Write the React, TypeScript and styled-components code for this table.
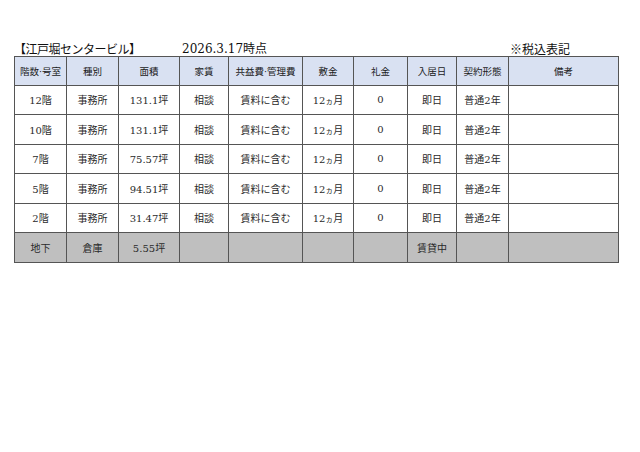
import React from "react";
import styled, { createGlobalStyle } from "styled-components";

const Global = createGlobalStyle`
  html, body { margin: 0; padding: 0; background: #ffffff; }
  body { font-family: "DejaVu Serif", "Noto Sans CJK JP", serif; color: #222; }
`;

const Page = styled.div`
  width: 640px;
  height: 452px;
  padding: 42px 0 0 14px;
  box-sizing: border-box;
`;

const TitleRow = styled.div`
  display: flex;
  align-items: flex-end;
  width: 604px;
  height: 14px;
  font-size: 12px;
  line-height: 14px;
  color: #111;
`;

const Title = styled.div`
  width: 168px;
  font-family: "Noto Sans CJK JP", sans-serif;
  letter-spacing: -0.5px;
`;

const DateText = styled.div`
  flex: 1;
  font-family: "DejaVu Serif", "Noto Sans CJK JP", serif;
  font-size: 12px;
  letter-spacing: 0px;
`;

const Note = styled.div`
  width: 108px;
  font-family: "Noto Sans CJK JP", sans-serif;
`;

const Table = styled.table`
  border-collapse: collapse;
  table-layout: fixed;
  width: 604px;
  border: 1px solid #444;
`;

const Th = styled.th`
  background: #d9e1f2;
  border: 1px solid #555;
  height: 27.5px;
  padding: 0;
  font-weight: normal;
  font-size: 9.5px;
  font-family: "DejaVu Sans", "Noto Sans CJK JP", sans-serif;
  color: #1a1a1a;
  text-align: center;
  vertical-align: middle;
`;

const Td = styled.td<{ $gray?: boolean }>`
  background: ${(p) => (p.$gray ? "#bfbfbf" : "#ffffff")};
  border: 1px solid #555;
  height: 28.5px;
  padding: 0;
  font-size: 10px;
  color: #2a2a2a;
  text-align: center;
  vertical-align: middle;
  white-space: nowrap;
`;

const widths = [52, 52, 61, 49, 74, 51, 54, 49, 52, 110];
const headers = ["階数·号室", "種別", "面積", "家賃", "共益費·管理費", "敷金", "礼金", "入居日", "契約形態", "備考"];

const rows: string[][] = [
  ["12階", "事務所", "131.1坪", "相談", "賃料に含む", "12ヵ月", "0", "即日", "普通2年", ""],
  ["10階", "事務所", "131.1坪", "相談", "賃料に含む", "12ヵ月", "0", "即日", "普通2年", ""],
  ["7階", "事務所", "75.57坪", "相談", "賃料に含む", "12ヵ月", "0", "即日", "普通2年", ""],
  ["5階", "事務所", "94.51坪", "相談", "賃料に含む", "12ヵ月", "0", "即日", "普通2年", ""],
  ["2階", "事務所", "31.47坪", "相談", "賃料に含む", "12ヵ月", "0", "即日", "普通2年", ""],
];
const lastRow = ["地下", "倉庫", "5.55坪", "", "", "", "", "賃貸中", "", ""];

const Small = styled.span`
  font-size: 8px;
`;

function renderCell(text: string) {
  if (text.includes("ヵ")) {
    const [a, b] = text.split("ヵ");
    return (
      <>
        {a}
        <Small>ヵ</Small>
        {b}
      </>
    );
  }
  return text;
}

export default function App() {
  return (
    <>
      <Global />
      <Page>
        <TitleRow>
          <Title>【江戸堀センタービル】</Title>
          <DateText>2026.3.17時点</DateText>
          <Note>※税込表記</Note>
        </TitleRow>
        <Table>
          <colgroup>
            {widths.map((w, i) => (
              <col key={i} style={{ width: w }} />
            ))}
          </colgroup>
          <thead>
            <tr>
              {headers.map((h) => (
                <Th key={h}>{h}</Th>
              ))}
            </tr>
          </thead>
          <tbody>
            {rows.map((r, i) => (
              <tr key={i}>
                {r.map((c, j) => (
                  <Td key={j}>{renderCell(c)}</Td>
                ))}
              </tr>
            ))}
            <tr>
              {lastRow.map((c, j) => (
                <Td key={j} $gray>
                  {c}
                </Td>
              ))}
            </tr>
          </tbody>
        </Table>
      </Page>
    </>
  );
}
